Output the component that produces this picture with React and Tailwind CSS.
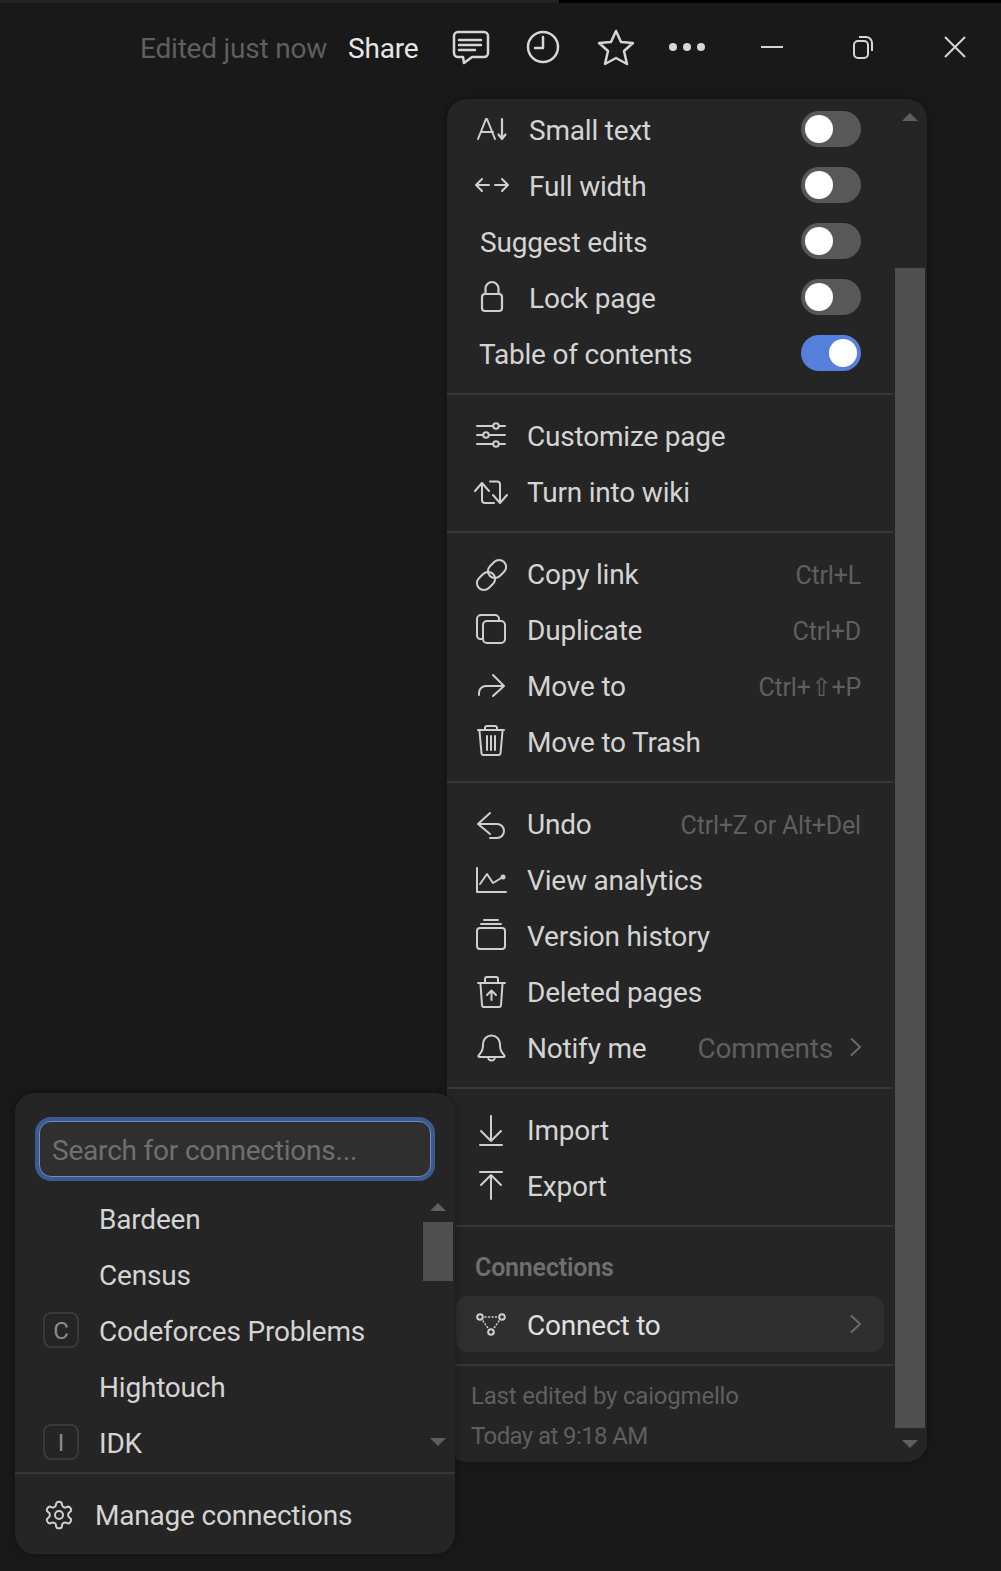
import React from "react";

const S = ({ children }) => (
  <svg width="36" height="36" viewBox="0 0 36 36" fill="none" stroke="currentColor" strokeWidth="2" strokeLinecap="round" strokeLinejoin="round">
    {children}
  </svg>
);

const icons = {
  small: <S><path d="M4 28 12 8h1L21 28M7 21h12" /><path d="M28 8v19M24.500 23.500 28 28l3.500-4.500" strokeWidth="2.200" /></S>,
  width: <S><path d="M15 18H2M8 12l-6 6 6 6M21 18h13M28 12l6 6-6 6" /></S>,
  lock: <S><rect x="8" y="15" width="20" height="17" rx="3" strokeWidth="2.200" /><path d="M11.500 15V9.500a6.500 6.500 0 0 1 13 0V15" strokeWidth="2.200" /></S>,
  custom: <S><path d="M3 7h16M25 7h6M3 16h6M15 16h16M3 25h16M25 25h6" /><circle cx="22" cy="7" r="2.800" /><circle cx="12" cy="16" r="2.800" /><circle cx="22" cy="25" r="2.800" /></S>,
  wiki: <S><path d="M1 16l7-8 7 8M8 8v17a3 3 0 0 0 3 3h9M16 6.500h7a3 3 0 0 1 3 3V27M19 20l7 8 7-8" /></S>,
  link: <S><rect x="13" y="5" width="20" height="14" rx="7" transform="rotate(-45 23 12)" /><rect x="2" y="17" width="20" height="14" rx="7" transform="rotate(-45 12 24)" /></S>,
  dup: <S><path d="M8 26H6.500A3.500 3.500 0 0 1 3 22.500V6a4 4 0 0 1 4-4h14a4 4 0 0 1 4 4v2" /><rect x="9" y="8" width="22" height="22" rx="4" /></S>,
  move: <S><path d="M5 26v-2c0-4 3-7 7-7h18M19 6l11 11-11 10" /></S>,
  trash: <S><path d="M4 5h26M5.500 6l2 22.500a2 2 0 0 0 2 1.500h15a2 2 0 0 0 2-1.500l2-22.500M11 5V2.500A2 2 0 0 1 13 1h8a2 2 0 0 1 2 1.500V5M13 11v14M17 11v14M21 11v14" /></S>,
  undo: <S><path d="M16 6 4 17l12 10M4 17h19a7 7 0 0 1 0 14h-7" /></S>,
  chart: <S><path d="M3 5v24h29M6 21l7-10 6 9 10-6" /><circle cx="29" cy="14" r="1.500" fill="currentColor" /></S>,
  version: <S><rect x="3" y="9" width="28" height="21" rx="3" /><path d="M7 5h20M10 1h14" /></S>,
  restore: <S><path d="M4 8h27M6.500 9l1.500 21a2 2 0 0 0 2 2h15a2 2 0 0 0 2-2l1.500-21M11 7V4a2 2 0 0 1 2-2h9a2 2 0 0 1 2 2v3M17.500 25v-9M13 20l4.500-4.500L22 20" /></S>,
  bell: <S><path d="M5 24c3-3 4-5 4-10v-1a8.500 8.500 0 0 1 17 0v1c0 5 1 7 4 10 1 1 1 2-1 2H6c-2 0-2-1-1-2Z" /><path d="M14 26a3.500 3.500 0 0 0 7 0" /></S>,
  imp: <S><path d="M17 3v25M7 18l10 10 10-10M6 32h22" /></S>,
  exp: <S><path d="M17 30V6M7 16 17 6l10 10M6 3h22" /></S>,
  connect: <S><circle cx="6" cy="11" r="2.800" /><circle cx="28" cy="11" r="2.800" /><circle cx="17" cy="26" r="2.800" /><path strokeDasharray="1 2.500" d="M11 11h12M9 15l5 7M25 15l-5 7" strokeWidth="1.500" /></S>,
};

const Toggle = ({ on }) => (
  <span className={`flex h-9 w-[60px] shrink-0 items-center rounded-full p-1 ${on ? "justify-end bg-[#5580db]" : "justify-start bg-[#575857]"}`}>
    <span className="h-7 w-7 rounded-full bg-white" />
  </span>
);

const Chevron = () => (
  <svg width="11" height="20" viewBox="0 0 11 20" fill="none" stroke="currentColor" strokeWidth="2" strokeLinecap="round" strokeLinejoin="round"><path d="M1.500 2l8.500 8-8.500 8" /></svg>
);

const Divider = () => <div className="h-0.5 bg-[#373737]" />;

const Row = ({ icon, label, hint, toggle, on, chevron, textX = "pl-[80px]", endX = "pr-8", iconX = "left-[27px]", iconY = "top-3", tone = "text-[#d4d4d4]" }) => (
  <div className={`relative flex h-14 items-center justify-between ${endX} ${textX} ${tone}`}>
    {icon && <span className={`absolute text-[#cfcfcf] ${iconY} ${iconX}`}>{icons[icon]}</span>}
    <span className="pt-1">{label}</span>
    {hint && <span className="pt-1 text-[25px] text-[#5f5f5f]">{hint}</span>}
    {toggle && <Toggle on={on} />}
    {chevron && (
      <span className="flex items-center gap-[17px] text-[#6a6a6a]">
        {chevron !== true && <span className="pt-1 text-[#5f5f5f]">{chevron}</span>}
        <Chevron />
      </span>
    )}
  </div>
);

const Arrow = ({ up }) => (
  <span className={`block h-0 w-0 border-x-[8px] border-x-transparent ${up ? "border-b-[8px] border-b-[#5f5f5f]" : "border-t-[8px] border-t-[#5f5f5f]"}`} />
);

const Tile = ({ ch }) => (
  <span className="absolute left-[28px] top-[10px] flex h-9 w-9 items-center justify-center rounded-lg border-2 border-[#3a3a3a] pt-0.5 text-[24px] text-[#8a8a8a]">{ch}</span>
);

const Conn = ({ label, tile }) => (
  <div className="relative flex h-14 items-center pl-[84px] text-[#d4d4d4]">
    {tile && <Tile ch={tile} />}
    <span className="pt-1">{label}</span>
  </div>
);

export default function App() {
  return (
    <div className="relative h-[1571px] w-[1001px] overflow-hidden bg-[#191919] text-[28px] leading-none tracking-[-0.2px] [font-family:'Roboto','Noto_Sans',sans-serif]">
      <div className="flex h-[3px]">
        <div className="w-[559px] bg-[#222222]" />
        <div className="flex-1 bg-black" />
      </div>
      <header className="flex h-[93px] items-center pb-[6px] pl-[140px] text-[#d4d4d4]">
        <span className="w-[208px] pt-1 text-[#5f5f5f]">Edited just now</span>
        <span className="w-[104px] pt-1 text-[#e6e6e6]">Share</span>
        <div className="flex items-center text-[#d6d6d6]">
          <svg width="38" height="38" viewBox="0 0 38 38" fill="none" stroke="currentColor" strokeWidth="2.500" strokeLinejoin="round" strokeLinecap="round">
            <path d="M6 4h26a4 4 0 0 1 4 4v17a4 4 0 0 1-4 4H20l-8 6-1-6H6a4 4 0 0 1-4-4V8a4 4 0 0 1 4-4Z" />
            <path d="M7 12h22M7 17h22M7 22h16" />
          </svg>
          <svg className="ml-[36px]" width="34" height="34" viewBox="0 0 34 34" fill="none" stroke="currentColor" strokeWidth="2.500" strokeLinecap="round" strokeLinejoin="round">
            <circle cx="17" cy="17" r="15" /><path d="M17 7v11h-8" />
          </svg>
          <svg className="ml-[37px]" width="38" height="38" viewBox="0 0 38 38" fill="none" stroke="currentColor" strokeWidth="2.500" strokeLinejoin="round">
            <path d="M19 3l5 11 12 1-9 8 3 13-11-6-11 6 3-13-9-8 12-1Z" />
          </svg>
          <svg className="ml-[33px]" width="38" height="10" viewBox="0 0 38 10" fill="currentColor">
            <circle cx="5" cy="5" r="4" /><circle cx="19" cy="5" r="4" /><circle cx="33" cy="5" r="4" />
          </svg>
          <svg className="ml-[55px]" width="22" height="2" viewBox="0 0 22 2" fill="currentColor"><rect width="22" height="2" /></svg>
          <svg className="ml-[69px]" width="22" height="24" viewBox="0 0 22 24" fill="none" stroke="currentColor" strokeWidth="2">
            <rect x="2" y="6" width="14" height="17" rx="4" /><path d="M7 2h7a6 6 0 0 1 6 6v8" />
          </svg>
          <svg className="ml-[69px]" width="24" height="24" viewBox="0 0 24 24" fill="none" stroke="currentColor" strokeWidth="2"><path d="M2 2l20 20M22 2 2 22" /></svg>
        </div>
      </header>

      <section className="absolute left-[447px] top-[99px] flex h-[1363px] w-[480px] overflow-hidden rounded-[20px] bg-[#252525] shadow-[0_0_8px_rgba(0,0,0,0.35)]">
        <div className="w-[446px] pt-[2px]">
          <div className="pb-3">
            <Row icon="small" label="Small text" toggle textX="pl-[82px]" iconY="top-[10px]" />
            <Row icon="width" label="Full width" toggle textX="pl-[82px]" iconY="top-[10px]" />
            <Row label="Suggest edits" toggle textX="pl-[33px]" />
            <Row icon="lock" label="Lock page" toggle textX="pl-[82px]" iconY="top-[10px]" />
            <Row label="Table of contents" toggle on textX="pl-[32px]" />
          </div>
          <Divider />
          <div className="py-3">
            <Row icon="custom" label="Customize page" />
            <Row icon="wiki" label="Turn into wiki" />
          </div>
          <Divider />
          <div className="py-3">
            <Row icon="link" label="Copy link" hint="Ctrl+L" />
            <Row icon="dup" label="Duplicate" hint="Ctrl+D" />
            <Row icon="move" label="Move to" hint="Ctrl+⇧+P" />
            <Row icon="trash" label="Move to Trash" />
          </div>
          <Divider />
          <div className="py-3">
            <Row icon="undo" label="Undo" hint="Ctrl+Z or Alt+Del" />
            <Row icon="chart" label="View analytics" />
            <Row icon="version" label="Version history" />
            <Row icon="restore" label="Deleted pages" />
            <Row icon="bell" label="Notify me" chevron="Comments" />
          </div>
          <Divider />
          <div className="py-3">
            <Row icon="imp" label="Import" />
            <Row icon="exp" label="Export" />
          </div>
          <Divider />
          <div className="flex h-[69px] items-end pb-4 pl-[28px] text-[25px] font-semibold text-[#6f6f6f]">Connections</div>
          <div className="mx-[9px] rounded-xl bg-[#2f2f2f]">
            <Row icon="connect" label="Connect to" chevron textX="pl-[71px]" endX="pr-[23px]" iconX="left-[18px]" iconY="top-[10px]" tone="text-[#e0e0e0]" />
          </div>
          <div className="mt-3"><Divider /></div>
          <div className="pl-6 pt-[18px] text-[24px] text-[#5f5f5f]">
            <div>Last edited by caiogmello</div>
            <div className="mt-4 tracking-[-0.6px]">Today at 9:18 AM</div>
          </div>
        </div>
        <div className="flex w-[34px] flex-col px-[2px]">
          <div className="flex h-[169px] justify-center pt-[14px]"><Arrow up /></div>
          <div className="h-[1160px] bg-[#4f4f4f]" />
          <div className="flex justify-center pt-[12px]"><Arrow /></div>
        </div>
      </section>

      <section className="absolute left-[15px] top-[1093px] flex h-[461px] w-[440px] flex-col overflow-hidden rounded-[20px] bg-[#252525] shadow-[0_0_8px_rgba(0,0,0,0.35)]">
        <div className="px-6 pt-7">
          <div className="flex h-14 items-center rounded-xl border border-[#6d8cc2] bg-[#2f2f2f] pl-3 pt-1 text-[#6f6f6f] ring-4 ring-[#3c5a8e]">Search for connections...</div>
        </div>
        <div className="flex flex-1">
          <div className="flex-1 pt-[13px]">
            <Conn label="Bardeen" />
            <Conn label="Census" />
            <Conn label="Codeforces Problems" tile="C" />
            <Conn label="Hightouch" />
            <Conn label="IDK" tile="I" />
          </div>
          <div className="flex w-[32px] flex-col pr-[2px]">
            <div className="flex h-[45px] justify-center pt-[26px]"><Arrow up /></div>
            <div className="h-[59px] bg-[#4f4f4f]" />
            <div className="flex justify-center pt-[157px]"><Arrow /></div>
          </div>
        </div>
        <Divider />
        <div className="relative flex h-[80px] items-center pl-[80px] text-[#d4d4d4]">
          <svg className="absolute left-[28px] top-[25px] text-[#cfcfcf]" width="32" height="32" viewBox="0 0 24 24" fill="none" stroke="currentColor" strokeWidth="1.500" strokeLinecap="round" strokeLinejoin="round">
            <path d="M12.220 2h-.440a2 2 0 0 0-2 2v.180a2 2 0 0 1-1 1.730l-.430.250a2 2 0 0 1-2 0l-.150-.080a2 2 0 0 0-2.730.730l-.220.380a2 2 0 0 0 .730 2.730l.150.100a2 2 0 0 1 1 1.720v.510a2 2 0 0 1-1 1.740l-.150.090a2 2 0 0 0-.730 2.730l.220.380a2 2 0 0 0 2.730.730l.150-.080a2 2 0 0 1 2 0l.430.250a2 2 0 0 1 1 1.730V20a2 2 0 0 0 2 2h.440a2 2 0 0 0 2-2v-.180a2 2 0 0 1 1-1.730l.430-.250a2 2 0 0 1 2 0l.150.080a2 2 0 0 0 2.730-.730l.220-.390a2 2 0 0 0-.730-2.730l-.150-.080a2 2 0 0 1-1-1.740v-.500a2 2 0 0 1 1-1.740l.150-.090a2 2 0 0 0 .730-2.730l-.220-.380a2 2 0 0 0-2.730-.730l-.150.080a2 2 0 0 1-2 0l-.430-.250a2 2 0 0 1-1-1.730V4a2 2 0 0 0-2-2z" />
            <circle cx="12" cy="12" r="3" />
          </svg>
          <span className="pt-1">Manage connections</span>
        </div>
      </section>
    </div>
  );
}
